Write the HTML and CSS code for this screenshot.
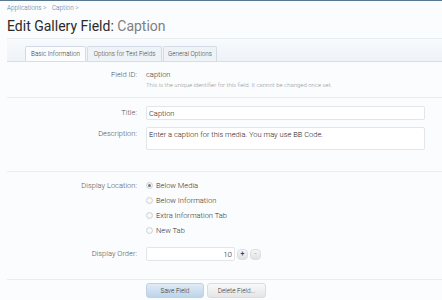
FILE: index.html
```html
<!DOCTYPE html>
<html lang="en">
<head>
    <meta charset="UTF-8">
    <meta name="viewport" content="width=device-width, initial-scale=1.0">
    <title>Edit Gallery Field</title>
    <link rel="stylesheet" href="styles.css">
</head>
<body>
    <div class="page">
        <div class="breadcrumb">
            <a href="#">Applications</a> &gt; <a href="#" class="crumb">Caption</a> &gt;
        </div>
        <h1>Edit Gallery Field: <span class="muted">Caption</span></h1>

        <div class="tab-band">
            <ul class="tabs">
                <li class="active">Basic Information</li>
                <li>Options for Text Fields</li>
                <li>General Options</li>
            </ul>
        </div>

        <form class="form">
            <div class="section section-id">
                <div class="row">
                    <div class="label">Field ID:</div>
                    <div class="value">
                        <div class="text">caption</div>
                        <div class="hint">This is the unique identifier for this field. It cannot be changed once set.</div>
                    </div>
                </div>
            </div>

            <div class="section section-text">
                <div class="row">
                    <div class="label">Title:</div>
                    <div class="value"><input class="input" type="text" value="Caption"></div>
                </div>
                <div class="row row-desc">
                    <div class="label">Description:</div>
                    <div class="value"><textarea class="input textarea">Enter a caption for this media. You may use BB Code.</textarea></div>
                </div>
            </div>

            <div class="section section-display">
                <div class="row">
                    <div class="label">Display Location:</div>
                    <div class="value">
                        <label class="radio"><input type="radio" name="loc" checked> Below Media</label>
                        <label class="radio"><input type="radio" name="loc"> Below Information</label>
                        <label class="radio"><input type="radio" name="loc"> Extra Information Tab</label>
                        <label class="radio"><input type="radio" name="loc"> New Tab</label>
                    </div>
                </div>
                <div class="row row-order">
                    <div class="label">Display Order:</div>
                    <div class="value spinner">
                        <input class="input number" type="text" value="10">
                        <button type="button" class="spin">+</button>
                        <button type="button" class="spin">-</button>
                    </div>
                </div>
            </div>

            <div class="submit">
                <button type="button" class="button primary">Save Field</button>
                <button type="button" class="button">Delete Field...</button>
            </div>
        </form>
    </div>
</body>
</html>
```

FILE: styles.css
```css
* {
    box-sizing: border-box;
}
body {
    font-family: Roboto, "Liberation Sans", Arial, sans-serif;
    font-weight: 300;
    background-color: #fafcfe;
    color: #333;
    margin: 0;
    padding: 0;
    border-top: 1px solid #5a7890;
}
.page {
    padding-left: 7px;
}
.breadcrumb {
    font-size: 6.4px;
    line-height: 8px;
    padding-top: 3px;
    color: #7890a8;
}
.breadcrumb a {
    color: #5a7894;
    text-decoration: none;
}
.breadcrumb .crumb {
    margin-left: 4px;
}
h1 {
    font-size: 14px;
    font-weight: normal;
    line-height: 16px;
    margin: 6px 0 0;
    color: #2a2a2a;
}
h1 .muted {
    color: #808080;
}
.tab-band {
    margin-top: 4px;
    height: 24px;
    border-top: 1px solid #e8edf2;
    border-bottom: 1px solid #d6dee7;
    background: linear-gradient(#f8fafc, #eef3f8);
    padding-left: 18px;
    display: flex;
    align-items: flex-end;
}
.tabs {
    list-style: none;
    margin: 0;
    padding: 0;
    display: flex;
    gap: 1px;
}
.tabs li {
    height: 15px;
    line-height: 14px;
    font-size: 6.3px;
    color: #444;
    padding: 0;
    text-align: center;
    white-space: nowrap;
    border: 1px solid #d3dce6;
    border-bottom: none;
    border-radius: 2px 2px 0 0;
    background: #eef3f8;
}
.tabs li.active {
    background: #fbfcfe;
    color: #333;
}
.tabs li:nth-child(1) { width: 61px; }
.tabs li:nth-child(2) { width: 75px; }
.tabs li:nth-child(3) { width: 54px; }
.section {
    border-bottom: 1px solid #e9edf1;
    padding-right: 17px;
}
.row {
    display: grid;
    grid-template-columns: 130px 1fr;
    column-gap: 9px;
    font-size: 7.5px;
}
.label {
    text-align: right;
    color: #555;
}
.section-id {
    padding-top: 8px;
    padding-bottom: 7px;
}
.section-id .label,
.section-id .text {
    line-height: 10px;
}
.hint {
    font-size: 6px;
    line-height: 10px;
    color: #999;
}
.section-text {
    padding-top: 8px;
    padding-bottom: 21px;
}
.section-text .label {
    line-height: 14px;
}
.row-desc {
    margin-top: 7px;
}
.row-desc .label {
    line-height: 13px;
}
.input {
    display: block;
    width: 100%;
    height: 14px;
    border: 1px solid #e2e6ea;
    border-radius: 2px;
    background: #fff;
    font-family: inherit;
    font-weight: 300;
    font-size: 7.5px;
    color: #222;
    padding: 0 2px;
    margin: 0;
    outline: none;
}
.textarea {
    height: 23px;
    resize: none;
    padding: 2px;
    line-height: 9px;
    overflow: hidden;
}
.section-display {
    padding-top: 6px;
    padding-bottom: 18px;
}
.section-display .label {
    line-height: 15px;
}
.radio {
    display: flex;
    align-items: center;
    height: 15px;
    gap: 3px;
    color: #333;
}
.radio input {
    appearance: none;
    width: 7px;
    height: 7px;
    margin: 0;
    border: 1px solid #cfd3d7;
    border-radius: 50%;
    background: radial-gradient(#fff, #eceef0);
    display: grid;
    place-items: center;
}
.radio input:checked::after {
    content: "";
    width: 3px;
    height: 3px;
    border-radius: 50%;
    background: #777;
}
.row-order {
    margin-top: 9px;
}
.row-order .label {
    line-height: 14px;
}
.spinner {
    display: flex;
    align-items: center;
    gap: 2px;
}
.number {
    width: 89px;
    text-align: right;
    font-size: 8px;
}
.spin {
    width: 11px;
    height: 11px;
    padding: 0;
    border: 1px solid #dcdfe2;
    border-radius: 4px;
    background: linear-gradient(#f6f6f6, #e0e1e2);
    font-size: 7px;
    font-weight: bold;
    line-height: 9px;
    color: #444;
    font-family: inherit;
}
.spin + .spin {
    color: #999;
    font-weight: normal;
}
.submit {
    padding: 3px 0 0 139px;
    display: flex;
    gap: 3px;
}
.button {
    height: 15px;
    width: 59px;
    padding: 0;
    border: 1px solid #dadcdf;
    border-radius: 3px;
    background: linear-gradient(#f9f9f9, #e4e5e7);
    font-family: inherit;
    font-weight: 300;
    font-size: 6.5px;
    color: #333;
}
.button.primary {
    width: 58px;
    border-color: #bdd2e5;
    background: linear-gradient(#e0ebf5, #bcd4ea);
}
```
